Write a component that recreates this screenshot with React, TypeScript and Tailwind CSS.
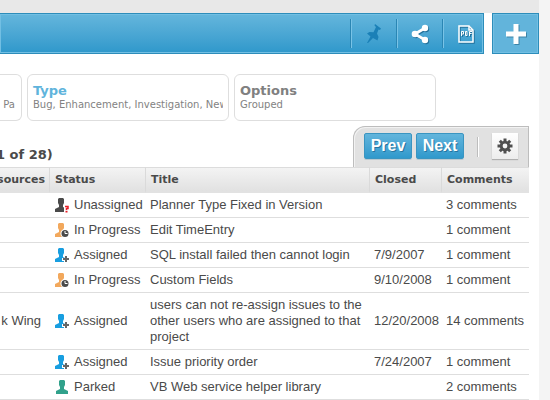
import React from "react";

type Status = "Unassigned" | "In Progress" | "Assigned" | "Parked";

interface Issue {
  resource: string;
  status: Status;
  title: string;
  closed: string;
  comments: string;
}

const issues: Issue[] = [
  { resource: "", status: "Unassigned", title: "Planner Type Fixed in Version", closed: "", comments: "3 comments" },
  { resource: "", status: "In Progress", title: "Edit TimeEntry", closed: "", comments: "1 comment" },
  { resource: "", status: "Assigned", title: "SQL install failed then cannot login", closed: "7/9/2007", comments: "1 comment" },
  { resource: "", status: "In Progress", title: "Custom Fields", closed: "9/10/2008", comments: "1 comment" },
  {
    resource: "k Wing",
    status: "Assigned",
    title: "users can not re-assign issues to the other users who are assigned to that project",
    closed: "12/20/2008",
    comments: "14 comments",
  },
  { resource: "", status: "Assigned", title: "Issue priority order", closed: "7/24/2007", comments: "1 comment" },
  { resource: "", status: "Parked", title: "VB Web service helper library", closed: "", comments: "2 comments" },
];

function StatusIcon({ status }: { status: Status }) {
  const fill = { Unassigned: "#4a4a4a", "In Progress": "#f2a85c", Assigned: "#189ee0", Parked: "#31a18b" }[status];
  return (
    <svg width="14" height="16" viewBox="0 0 14 16" className="shrink-0" aria-hidden="true">
      {status === "Parked" ? (
        <path d="M5 1h4l1 1v4l-1 2v2l4 2v3H1v-3l4-2V8L4 6V2z" fill={fill} />
      ) : (
        <path d="M4 1h4l1 1v4L8 8v2l2 1v4H0v-3l4-2V8L3 6V2z" fill={fill} />
      )}
      {status === "Unassigned" && (
        <>
          <path d="M9 8h5v8H9z" fill="#fff" />
          <path d="M10 9.5h3v2h-1.500v1.500" fill="none" stroke="#e81c24" strokeWidth="1.500" />
          <path d="M10.500 13.800h2v1.700h-2z" fill="#e81c24" />
        </>
      )}
      {status === "In Progress" && (
        <>
          <circle cx="10" cy="11.500" r="4.500" fill="#fff" />
          <circle cx="10" cy="11.500" r="3.500" fill="#4a4a4a" />
          <path d="M10 9v2.500h2.500" fill="none" stroke="#fff" strokeWidth="1" />
        </>
      )}
      {status === "Assigned" && (
        <>
          <path d="M7 11h3V8h4v7H9v-1H7z" fill="#fff" />
          <path d="M10 9h2v2h2v2h-2v2h-2v-2H8v-2h2z" fill="#666" />
        </>
      )}
    </svg>
  );
}

function PinIcon() {
  return (
    <svg width="16" height="20" viewBox="0 0 16 20" fill="#1b80b7" aria-hidden="true">
      <path d="M9 0l6 4.500-1 1.500-1.500-.5-1.500 4 1.500 3.500-1 3.500L7 14l-5 5H1l3.500-6.500L1 9.500l2.500-1.500 4 .2L10 3 8.500 1.500z" />
    </svg>
  );
}

function ShareIcon() {
  return (
    <svg width="18" height="20" viewBox="0 0 18 20" className="drop-shadow-[1px_1px_0_#23719b]" aria-hidden="true">
      <path d="M14 4L4 10l10 6" fill="none" stroke="#fff" strokeWidth="2.800" />
      <circle cx="14" cy="4" r="3.200" fill="#fff" />
      <circle cx="4" cy="10" r="3.300" fill="#fff" />
      <circle cx="14" cy="16" r="3.200" fill="#fff" />
    </svg>
  );
}

function PdfIcon() {
  return (
    <svg width="16" height="18" viewBox="0 0 16 18" className="drop-shadow-[1px_1px_0_#23719b]" aria-hidden="true">
      <path d="M1 1h10l4 4v12H1z" fill="none" stroke="#fff" strokeWidth="1.500" />
      <path d="M11 1v4h4" fill="none" stroke="#fff" strokeWidth="1.500" />
      <path d="M3.500 11V6.500H5.500v2.500H3.500M7.500 6.500v4h1.500V6.500H7.500M11.500 11V6.500h2.500M11.500 8.500h2" fill="none" stroke="#fff" strokeWidth="1" />
    </svg>
  );
}

function PlusIcon() {
  return (
    <svg width="20" height="20" viewBox="0 0 20 20" className="drop-shadow-[1px_1px_0_#3c84a8]" aria-hidden="true">
      <path d="M7.500 0h5v7.500H20v5h-7.500V20h-5v-7.500H0v-5h7.500z" fill="#fff" />
    </svg>
  );
}

function GearIcon() {
  return (
    <svg width="16" height="16" viewBox="0 0 16 16" aria-hidden="true">
      <g stroke="#505050" strokeWidth="3">
        <path d="M8 0.500v15M0.500 8h15M2.800 2.800l10.400 10.400M13.200 2.800L2.800 13.200" />
      </g>
      <circle cx="8" cy="8" r="5.200" fill="#505050" />
      <circle cx="8" cy="8" r="2.400" fill="#f6f6f6" />
    </svg>
  );
}

function ToolButton({ label, children }: { label: string; children: React.ReactNode }) {
  return (
    <button
      type="button"
      aria-label={label}
      className="flex h-[29px] w-[46px] items-center justify-center border-l border-[#2a86b4] shadow-[inset_1px_0_0_#79c3e6]"
    >
      {children}
    </button>
  );
}

function FilterCard({ title, value, active = false }: { title: string; value: string; active?: boolean }) {
  return (
    <button
      type="button"
      className="h-[47px] w-[202px] shrink-0 rounded-md border border-[#dedede] bg-white px-[5px] pb-[2px] text-left"
    >
      <span className={`block text-[13px] leading-4 font-bold ${active ? "text-[#5fb4dc]" : "text-[#808080]"}`}>{title}</span>
      <span className="block overflow-hidden text-[10px] leading-3 whitespace-nowrap text-[#828282]">{value}</span>
    </button>
  );
}

function PagerButton({ children }: { children: React.ReactNode }) {
  return (
    <button
      type="button"
      className="h-[26px] w-12 rounded-xs border border-[#3a95c1] bg-linear-to-b from-[#62b5dc] to-[#2f99cc] font-['Liberation_Sans',Arial,sans-serif] text-base leading-6 font-bold text-white text-shadow-[1px_1px_0_#2575a0] shadow-[0_1px_0_#b9c9d1]"
    >
      {children}
    </button>
  );
}

const headCell = "h-[26px] border-l border-b-2 border-l-[#dadada] border-b-[#e2e2e2] pt-[2px] px-[5px] text-left font-bold";
const bodyCell = "border-b border-[#dedede] py-1 pl-[5px]";

export default function App() {
  return (
    <div className="flex h-screen overflow-hidden bg-[#f4f4f4] font-['DejaVu_Sans',Verdana,sans-serif] text-[#4a4a4a]">
      <main className="mr-[11px] min-w-0 flex-1 bg-white">
        <div className="h-[13px] bg-[#e8e8e8]" />
        <header className="flex h-[41px] gap-2">
          <div className="flex flex-1 items-center justify-end border border-l-0 border-[#2d8dba] bg-linear-to-b from-[#64b6dc] to-[#2e98cb] shadow-[inset_0_0_0_1px_#72bfe3]">
            <ToolButton label="Pin"><PinIcon /></ToolButton>
            <ToolButton label="Share"><ShareIcon /></ToolButton>
            <div className="w-[41px]">
              <ToolButton label="Export to PDF"><PdfIcon /></ToolButton>
            </div>
          </div>
          <button
            type="button"
            aria-label="Add"
            className="flex w-[47px] items-center justify-center border border-[#2d8dba] bg-[#62b4db] shadow-[inset_0_0_0_1px_#72bfe3]"
          >
            <PlusIcon />
          </button>
        </header>

        <section className="mt-5 flex gap-[5px]">
          <button
            type="button"
            className="flex h-[47px] w-[22px] shrink-0 items-start justify-end rounded-r-md border border-l-0 border-[#dedede] pt-6 pr-[6px] text-[10px] leading-3 text-[#828282]"
          >
            Pa
          </button>
          <FilterCard title="Type" value="Bug, Enhancement, Investigation, New" active />
          <FilterCard title="Options" value="Grouped" />
        </section>

        <section className="mt-[5px] mr-[10px]">
          <div className="flex h-[41px] items-end justify-between">
            <p className="-ml-1 pb-1 text-[13px] leading-4 font-bold">1 of 28)</p>
            <div className="flex h-[41px] w-[176px] items-start rounded-tl-xl border border-b-0 border-[#bdbdbd] bg-[#e1e1e1] pt-[6px] pl-[10px] shadow-[inset_1px_1px_0_#f2f2f2]">
              <div className="flex gap-1">
                <PagerButton>Prev</PagerButton>
                <PagerButton>Next</PagerButton>
              </div>
              <div className="mt-1 ml-[13px] h-5 w-[2px] border-l border-[#bdbdbd] bg-white" />
              <button
                type="button"
                aria-label="Settings"
                className="ml-[13px] flex size-[26px] items-center justify-center bg-linear-to-b from-white to-[#ededed] shadow-[0_1px_1px_#b0b0b0]"
              >
                <GearIcon />
              </button>
            </div>
          </div>

          <table className="w-full table-fixed border-separate border-spacing-0">
            <colgroup>
              <col className="w-[49px]" />
              <col className="w-24" />
              <col />
              <col className="w-[72px]" />
              <col className="w-[88px]" />
            </colgroup>
            <thead className="bg-linear-to-b from-[#f4f4f4] to-[#e0e0e0] text-[11px] leading-4 shadow-[inset_0_1px_0_#dcdcdc]">
              <tr>
                <th scope="col" className="h-[26px] border-b-2 border-[#e2e2e2] pt-[2px] pr-1 font-bold">
                  <div className="flex justify-end">sources</div>
                </th>
                <th scope="col" className={headCell}>Status</th>
                <th scope="col" className={headCell}>Title</th>
                <th scope="col" className={headCell}>Closed</th>
                <th scope="col" className={headCell}>Comments</th>
              </tr>
            </thead>
            <tbody className="font-['Liberation_Sans',Arial,sans-serif] text-[13px] leading-4">
              {issues.map((issue) => (
                <tr key={issue.title}>
                  <td className="border-b border-[#dedede] py-1 pr-2">
                    <div className="flex justify-end whitespace-nowrap">{issue.resource}</div>
                  </td>
                  <td className="border-b border-[#dedede] py-1 pl-[6px]">
                    <div className="flex items-center gap-[5px] whitespace-nowrap">
                      <StatusIcon status={issue.status} />
                      {issue.status}
                    </div>
                  </td>
                  <td className={bodyCell}>{issue.title}</td>
                  <td className={bodyCell}>{issue.closed}</td>
                  <td className={`${bodyCell} whitespace-nowrap`}>{issue.comments}</td>
                </tr>
              ))}
            </tbody>
          </table>
        </section>
      </main>
    </div>
  );
}
